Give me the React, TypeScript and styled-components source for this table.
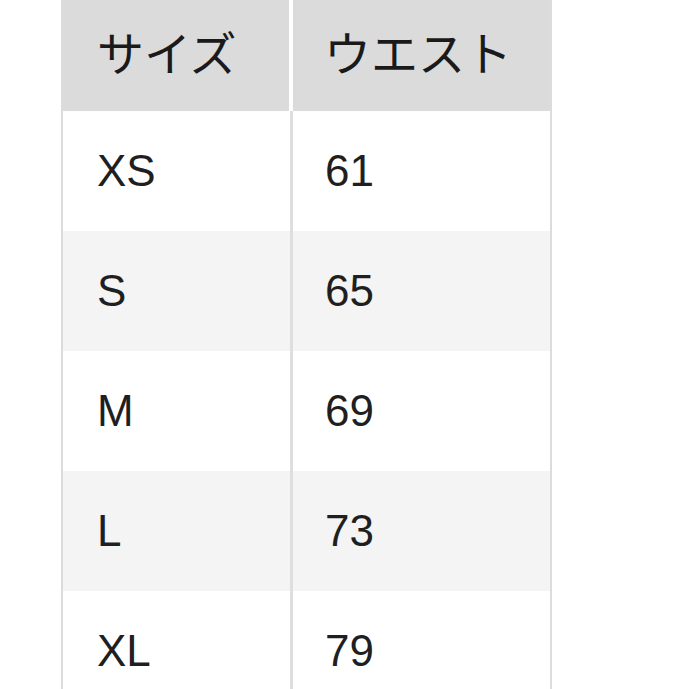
import styled, { createGlobalStyle } from "styled-components";

const GlobalStyle = createGlobalStyle`
  html, body {
    margin: 0;
    padding: 0;
    background: #ffffff;
  }
  body {
    font-family: "Liberation Sans", "Noto Sans CJK JP", sans-serif;
    color: #1f1f1f;
  }
`;

const Page = styled.div`
  width: 689px;
  height: 689px;
  overflow: hidden;
  padding-left: 61px;
  box-sizing: border-box;
`;

const Table = styled.div`
  width: 491px;
  border-left: 2px solid #dcdcdc;
  border-right: 2px solid #dcdcdc;
  box-sizing: border-box;
`;

const Row = styled.div<{ $head?: boolean; $shade?: boolean }>`
  display: grid;
  grid-template-columns: 230px 1fr;
  height: ${(p) => (p.$head ? "111px" : "120px")};
  background: ${(p) => (p.$shade ? "#f4f4f4" : "#ffffff")};
`;

const Cell = styled.div<{ $first?: boolean }>`
  display: flex;
  align-items: center;
  padding-left: ${(p) => (p.$first ? "34px" : "32px")};
  font-size: 44px;
  border-right: ${(p) => (p.$first ? "3px solid #dedede" : "none")};
`;

const HeadCell = styled.div<{ $first?: boolean }>`
  display: flex;
  align-items: center;
  padding-left: ${(p) => (p.$first ? "34px" : "31px")};
  padding-bottom: 10px;
  font-family: "Noto Sans CJK JP", sans-serif;
  font-weight: 400;
  font-size: 47px;
  color: #1a1a1a;
  background: #dbdbdb;
  border-right: ${(p) => (p.$first ? "4px solid #ffffff" : "none")};
`;

const sizes = [
  { size: "XS", waist: "61" },
  { size: "S", waist: "65" },
  { size: "M", waist: "69" },
  { size: "L", waist: "73" },
  { size: "XL", waist: "79" },
];

const App = () => {
  return (
    <>
      <GlobalStyle />
      <Page>
        <Table>
          <Row $head>
            <HeadCell $first>サイズ</HeadCell>
            <HeadCell>ウエスト</HeadCell>
          </Row>
          {sizes.map((s, i) => (
            <Row key={s.size} $shade={i % 2 === 1}>
              <Cell $first>{s.size}</Cell>
              <Cell>{s.waist}</Cell>
            </Row>
          ))}
        </Table>
      </Page>
    </>
  );
};

export default App;
